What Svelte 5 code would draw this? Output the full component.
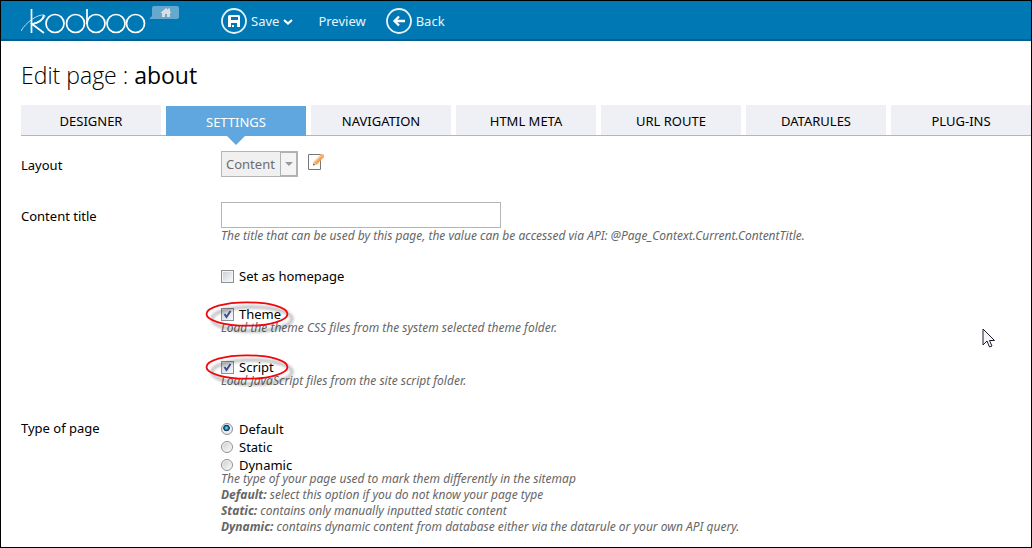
<script>
  const tabs = ['DESIGNER', 'SETTINGS', 'NAVIGATION', 'HTML META', 'URL ROUTE', 'DATARULES', 'PLUG-INS'];
  let active = $state('SETTINGS');
  let title = $state('');
  let homepage = $state(false);
  let theme = $state(true);
  let script = $state(true);
  let pageType = $state('Default');
</script>

{#snippet ring()}
  <svg class="ring" width="92" height="36" viewBox="0 0 92 36" aria-hidden="true">
    <ellipse class="ring-shadow" cx="47" cy="19" rx="40" ry="12" />
    <ellipse cx="42" cy="14" rx="40.500" ry="11.700" fill="none" stroke="#f0060c" stroke-width="1.800" />
  </svg>
{/snippet}

<div class="frame">
  <header>
    <a class="brand" href="#home" aria-label="kooboo">
      <svg width="160" height="38" viewBox="0 0 160 38" fill="none" stroke="#fff" stroke-width="1.7">
        <path d="M0 30C5 21 17 13 23 14C26 15 22 20 11 23" stroke-width="1" stroke="#b9dcf0" />
        <path d="M10.500 8V32M23 14C22 19 17 22 11 23L23 32" />
        <circle cx="34" cy="22.500" r="9" />
        <circle cx="54.500" cy="22.500" r="9" />
        <path d="M66 8V23" />
        <circle cx="75" cy="22.500" r="9" />
        <circle cx="95" cy="22.500" r="9" />
        <circle cx="114.500" cy="22.500" r="9" />
        <path d="M133 5H156Q158 5 158 7V16Q158 18 156 18H128L131 15V7Q131 5 133 5Z" fill="#66a9ce" stroke="none" />
        <path d="M139.500 12L145 7L147 8.800V7.500H149V10.500L150.500 12H149V16H146V13H144V16H141V12Z" fill="#d9dde0" stroke="none" />
      </svg>
    </a>
    <nav>
      <button type="button" class="action save">
        <svg width="26" height="26" viewBox="0 0 26 26" aria-hidden="true">
          <circle cx="13" cy="13" r="12" fill="none" stroke="#e6f2f9" stroke-width="1.8" />
          <path fill="#fff" fill-rule="evenodd" d="M8 7H18L19 8V19H7V8ZM10 9V12H17V9ZM10 15V19H11V17H13V19H16V15Z" />
        </svg>
        <span>Save</span>
        <svg class="chevron" width="10" height="8" viewBox="0 0 10 8" aria-hidden="true">
          <path d="M1 2L5 5.500L9 2" fill="none" stroke="#fff" stroke-width="2.200" />
        </svg>
      </button>
      <button type="button" class="action preview">Preview</button>
      <button type="button" class="action">
        <svg width="26" height="26" viewBox="0 0 26 26" aria-hidden="true">
          <circle cx="13" cy="13" r="12" fill="none" stroke="#e6f2f9" stroke-width="1.8" />
          <path d="M19 13H9M13 8.500L8.500 13L13 17.500" fill="none" stroke="#fff" stroke-width="2.300" />
        </svg>
        <span>Back</span>
      </button>
    </nav>
  </header>

  <main>
    <h1>Edit page : <strong>about</strong></h1>

    <div class="tabs" role="tablist">
      {#each tabs as tab}
        <button type="button" role="tab" aria-selected={active === tab} class:active={active === tab} onclick={() => (active = tab)}>{tab}</button>
      {/each}
    </div>

    <form>
      <div class="row">
        <label for="layout">Layout</label>
        <div class="inline">
          <div class="select">
            <select id="layout" disabled><option>Content</option></select>
            <span class="drop" aria-hidden="true"></span>
          </div>
          <button type="button" class="edit" aria-label="Edit layout">
            <svg width="17" height="18" viewBox="0 0 17 18">
              <path d="M.5 1.500H12.500V16.500H.5Z" fill="#fdfdfd" stroke="#777" />
              <path d="M5 12L6 8.500L13 1.500L16 4L9 11.500Z" fill="#f9a04c" />
              <path d="M6.500 9L13.500 2" stroke="#ffd09a" stroke-width="1.200" />
              <path d="M12 2.500L13.500 1Q15 .5 16 2L16.200 3.500L15 5Z" fill="#f3b183" />
              <path d="M5 12L6 8.500L9 11.500Z" fill="#ecc79f" />
              <path d="M5 12.500L5.500 10.500L7 12Z" fill="#555" />
            </svg>
          </button>
        </div>
      </div>

      <div class="row">
        <label for="title">Content title</label>
        <div>
          <input id="title" class="text" type="text" bind:value={title} />
          <p class="hint">The title that can be used by this page, the value can be accessed via API: @Page_Context.Current.ContentTitle.</p>
        </div>
      </div>

      <div class="row checks">
        <div class="field">
          <label class="choice"><input type="checkbox" bind:checked={homepage} />Set as homepage</label>
        </div>
        <div class="field">
          <label class="choice"><input type="checkbox" bind:checked={theme} />Theme</label>
          <p class="hint">Load the theme CSS files from the system selected theme folder.</p>
          {@render ring()}
        </div>
        <div class="field">
          <label class="choice"><input type="checkbox" bind:checked={script} />Script</label>
          <p class="hint">Load JavaScript files from the site script folder.</p>
          {@render ring()}
        </div>
      </div>

      <div class="row types" role="radiogroup" aria-labelledby="type-label">
        <span id="type-label">Type of page</span>
        <div>
          {#each ['Default', 'Static', 'Dynamic'] as type}
            <label class="choice"><input type="radio" name="type" value={type} bind:group={pageType} />{type}</label>
          {/each}
          <p class="hint">
            The type of your page used to mark them differently in the sitemap<br />
            <b>Default:</b> select this option if you do not know your page type<br />
            <b>Static:</b> contains only manually inputted static content<br />
            <b>Dynamic:</b> contains dynamic content from database either via the datarule or your own API query.
          </p>
        </div>
      </div>
    </form>
  </main>

  <svg class="pointer" width="14" height="21" viewBox="0 0 14 21" aria-hidden="true">
    <path d="M1 1V17L5 13L7.500 19L10 18L7.500 12.500H12.500Z" fill="#f6f6f8" stroke="#1c1c30" />
  </svg>
</div>

<style>
  :global(body) {
    margin: 0;
    background: #fff;
  }
  .frame {
    position: relative;
    box-sizing: border-box;
    min-height: 100vh;
    border: 1px solid #000;
    overflow: hidden;
    font-family: "Noto Sans", "Open Sans", sans-serif;
    font-size: 13px;
    line-height: 18px;
    color: #000;
  }
  button, input, select {
    font: inherit;
    margin: 0;
  }
  button {
    border: 0;
    padding: 0;
    background: none;
    color: inherit;
  }
  svg {
    display: block;
  }
  header {
    display: flex;
    height: 38px;
    padding-left: 20px;
    background: #0078b4;
    border-bottom: 2px solid #005f90;
    color: #e9f4fa;
  }
  .brand {
    width: 200px;
  }
  nav {
    display: flex;
    align-items: center;
    gap: 20px;
    padding-top: 2px;
  }
  .action {
    display: flex;
    align-items: center;
    gap: 4px;
  }
  .preview {
    padding: 0 0 0 5px;
  }
  .chevron {
    margin-top: 2px;
  }
  main {
    padding-left: 20px;
  }
  h1 {
    margin: 0;
    padding: 18px 0 14px;
    font-size: 23px;
    line-height: 32px;
    font-family: "Open Sans", sans-serif;
    font-weight: 300;
  }
  h1 strong {
    font-weight: 400;
  }
  .tabs {
    display: flex;
    gap: 5px;
    height: 30px;
    border-bottom: 1px solid #b5b5b5;
  }
  .tabs button {
    position: relative;
    flex: 0 0 140px;
    padding-top: 2px;
    background: #eff0f5;
  }
  .tabs .active {
    margin: 1px 0 -1px;
    background: #5fa7de;
    color: #fff;
  }
  .active::after {
    content: "";
    position: absolute;
    top: 100%;
    left: 50%;
    margin-left: -9px;
    border: 9px solid transparent;
    border-top-color: #5fa7de;
    border-bottom: 0;
  }
  form {
    display: grid;
    gap: 25px;
    padding-top: 15px;
  }
  .row {
    display: grid;
    grid-template-columns: 200px 1fr;
  }
  .row > label {
    padding-top: 5px;
  }
  .inline {
    display: flex;
    gap: 10px;
  }
  .select {
    position: relative;
  }
  select {
    display: block;
    appearance: none;
    box-sizing: border-box;
    width: 77px;
    height: 26px;
    padding: 0 4px;
    border: 1px solid #b5b5b5;
    border-radius: 0;
    background: #f0f0f0;
    color: #6d6d6d;
    opacity: 1;
  }
  .drop {
    position: absolute;
    top: 1px;
    right: 1px;
    display: grid;
    place-items: center;
    box-sizing: border-box;
    width: 17px;
    height: 24px;
    border: 1px solid #adb2b5;
    background: #f4f4f4;
    pointer-events: none;
  }
  .drop::after {
    content: "";
    border: 4px solid transparent;
    border-top-color: #999;
    border-bottom: 0;
  }
  .edit {
    align-self: start;
    margin-top: 2px;
  }
  .text {
    display: block;
    box-sizing: border-box;
    width: 280px;
    height: 26px;
    padding: 0 4px;
    border: 1px solid #b5b5b5;
  }
  .hint {
    margin: 0;
    font-size: 12px;
    line-height: 16px;
    font-style: italic;
    color: #666;
  }
  .checks {
    grid-template-columns: 1fr;
    gap: 20px;
    padding-left: 200px;
    margin-top: -2px;
  }
  .field {
    position: relative;
  }
  .choice {
    display: flex;
    align-items: center;
    gap: 5px;
  }
  .choice + .hint {
    margin-top: -3px;
  }
  .field .hint {
    padding-bottom: 2px;
  }
  .choice input {
    appearance: none;
    box-sizing: border-box;
    width: 13px;
    height: 13px;
    border: 1px solid #8e8f8f;
    background: linear-gradient(135deg, #cdd1d6, #f8f8f8) content-box, #f4f4f4;
    padding: 1px;
  }
  .choice input[type="checkbox"]:checked {
    background: url("data:image/svg+xml,%3Csvg xmlns='http://www.w3.org/2000/svg' viewBox='0 0 11 11'%3E%3Cpath d='M2.500 5L4.500 8L8.500 2' fill='none' stroke='%233d4f93' stroke-width='2'/%3E%3C/svg%3E"), linear-gradient(135deg, #cdd1d6, #f8f8f8);
  }
  .choice input[type="radio"] {
    width: 12px;
    height: 12px;
    margin-right: 1px;
    border-radius: 50%;
  }
  .choice input[type="radio"]:checked {
    background: radial-gradient(circle at 45% 40%, #6fd0f5 0 8%, #14608f 25%, #0b2e4c 36%, #e8ecef 44%);
  }
  .types {
    margin-top: 4px;
  }
  .types > span {
    margin-top: -1px;
  }
  .ring {
    position: absolute;
    top: -5px;
    left: -16px;
    pointer-events: none;
  }
  .ring-shadow {
    fill: none;
    stroke: rgba(0, 0, 0, 0.2);
    stroke-width: 4;
    filter: blur(1px);
  }
  .pointer {
    position: absolute;
    left: 981px;
    top: 327px;
    pointer-events: none;
  }
</style>
